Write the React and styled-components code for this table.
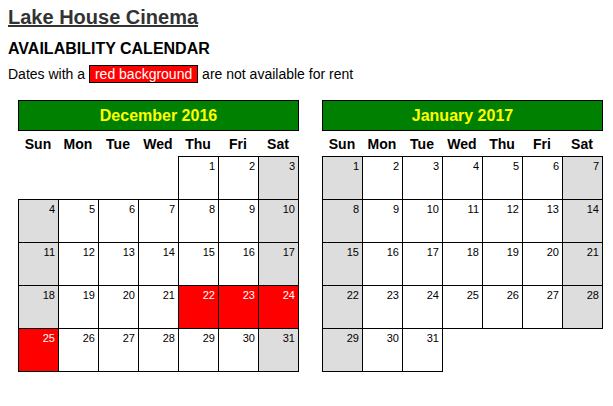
import React from "react";
import styled, { createGlobalStyle } from "styled-components";

const GlobalStyle = createGlobalStyle`
  body {
    margin: 0;
    background: #fff;
    font-family: "Liberation Sans", Arial, sans-serif;
  }
`;

const Page = styled("div")`
  padding: 6px 8px;
`;

const Title = styled("h1")`
  margin: 0;
  font-size: 20px;
  line-height: 23px;
  font-weight: bold;
  color: #333;
  text-decoration: underline;
`;

const Subtitle = styled("h2")`
  margin: 11px 0 0;
  font-size: 16px;
  line-height: 18px;
  font-weight: bold;
  color: #000;
`;

const Note = styled("p")`
  margin: 8px 0 0;
  font-size: 14px;
  line-height: 16px;
  color: #000;
`;

const RedTag = styled("span")`
  background: #f00;
  color: #fff;
  border: 1px solid #000;
  padding: 0 5px;
`;

const Calendars = styled("div")`
  display: flex;
  gap: 23px;
  margin-top: 18px;
  padding-left: 10px;
`;

const Month = styled("div")`
  width: 281px;
`;

const MonthHeader = styled("div")`
  box-sizing: border-box;
  height: 31px;
  background: #008000;
  border: 1px solid #000;
  color: #ff0;
  font-size: 16px;
  font-weight: bold;
  display: flex;
  align-items: center;
  justify-content: center;
`;

const DayNames = styled("div")`
  display: grid;
  grid-template-columns: repeat(7, 40px);
  height: 25px;
`;

const DayName = styled("div")`
  font-size: 14px;
  font-weight: bold;
  display: flex;
  align-items: center;
  justify-content: center;
`;

const Grid = styled("div")`
  display: grid;
  grid-template-columns: repeat(7, 40px);
  grid-auto-rows: 43px;
`;

const Cell = styled("div")`
  box-sizing: border-box;
  width: 41px;
  height: 44px;
  border: 1px solid #000;
  padding: 3px 3px 0 0;
  text-align: right;
  font-size: 11px;
  line-height: 13px;
  color: ${(p) => (p.$booked ? "#fff" : "#000")};
  background: ${(p) => (p.$booked ? "#f00" : p.$weekend ? "#ddd" : "#fff")};
`;

const Blank = styled("div")``;

const DAYS = ["Sun", "Mon", "Tue", "Wed", "Thu", "Fri", "Sat"];

const MONTHS = [
  { name: "December 2016", start: 4, days: 31, booked: [22, 23, 24, 25] },
  { name: "January 2017", start: 0, days: 31, booked: [] },
];

const Calendar = ({ month }) => {
  const cells = [];
  for (let i = 0; i < month.start; i++) cells.push(<Blank key={"b" + i} />);
  for (let d = 1; d <= month.days; d++) {
    const col = (month.start + d - 1) % 7;
    cells.push(
      <Cell
        key={d}
        $weekend={col === 0 || col === 6}
        $booked={month.booked.includes(d)}
      >
        {d}
      </Cell>
    );
  }
  return (
    <Month>
      <MonthHeader>{month.name}</MonthHeader>
      <DayNames>
        {DAYS.map((d) => (
          <DayName key={d}>{d}</DayName>
        ))}
      </DayNames>
      <Grid>{cells}</Grid>
    </Month>
  );
};

export default function App() {
  return (
    <Page>
      <GlobalStyle />
      <Title>Lake House Cinema</Title>
      <Subtitle>AVAILABILITY CALENDAR</Subtitle>
      <Note>
        Dates with a <RedTag>red background</RedTag> are not available for rent
      </Note>
      <Calendars>
        {MONTHS.map((m) => (
          <Calendar key={m.name} month={m} />
        ))}
      </Calendars>
    </Page>
  );
}
